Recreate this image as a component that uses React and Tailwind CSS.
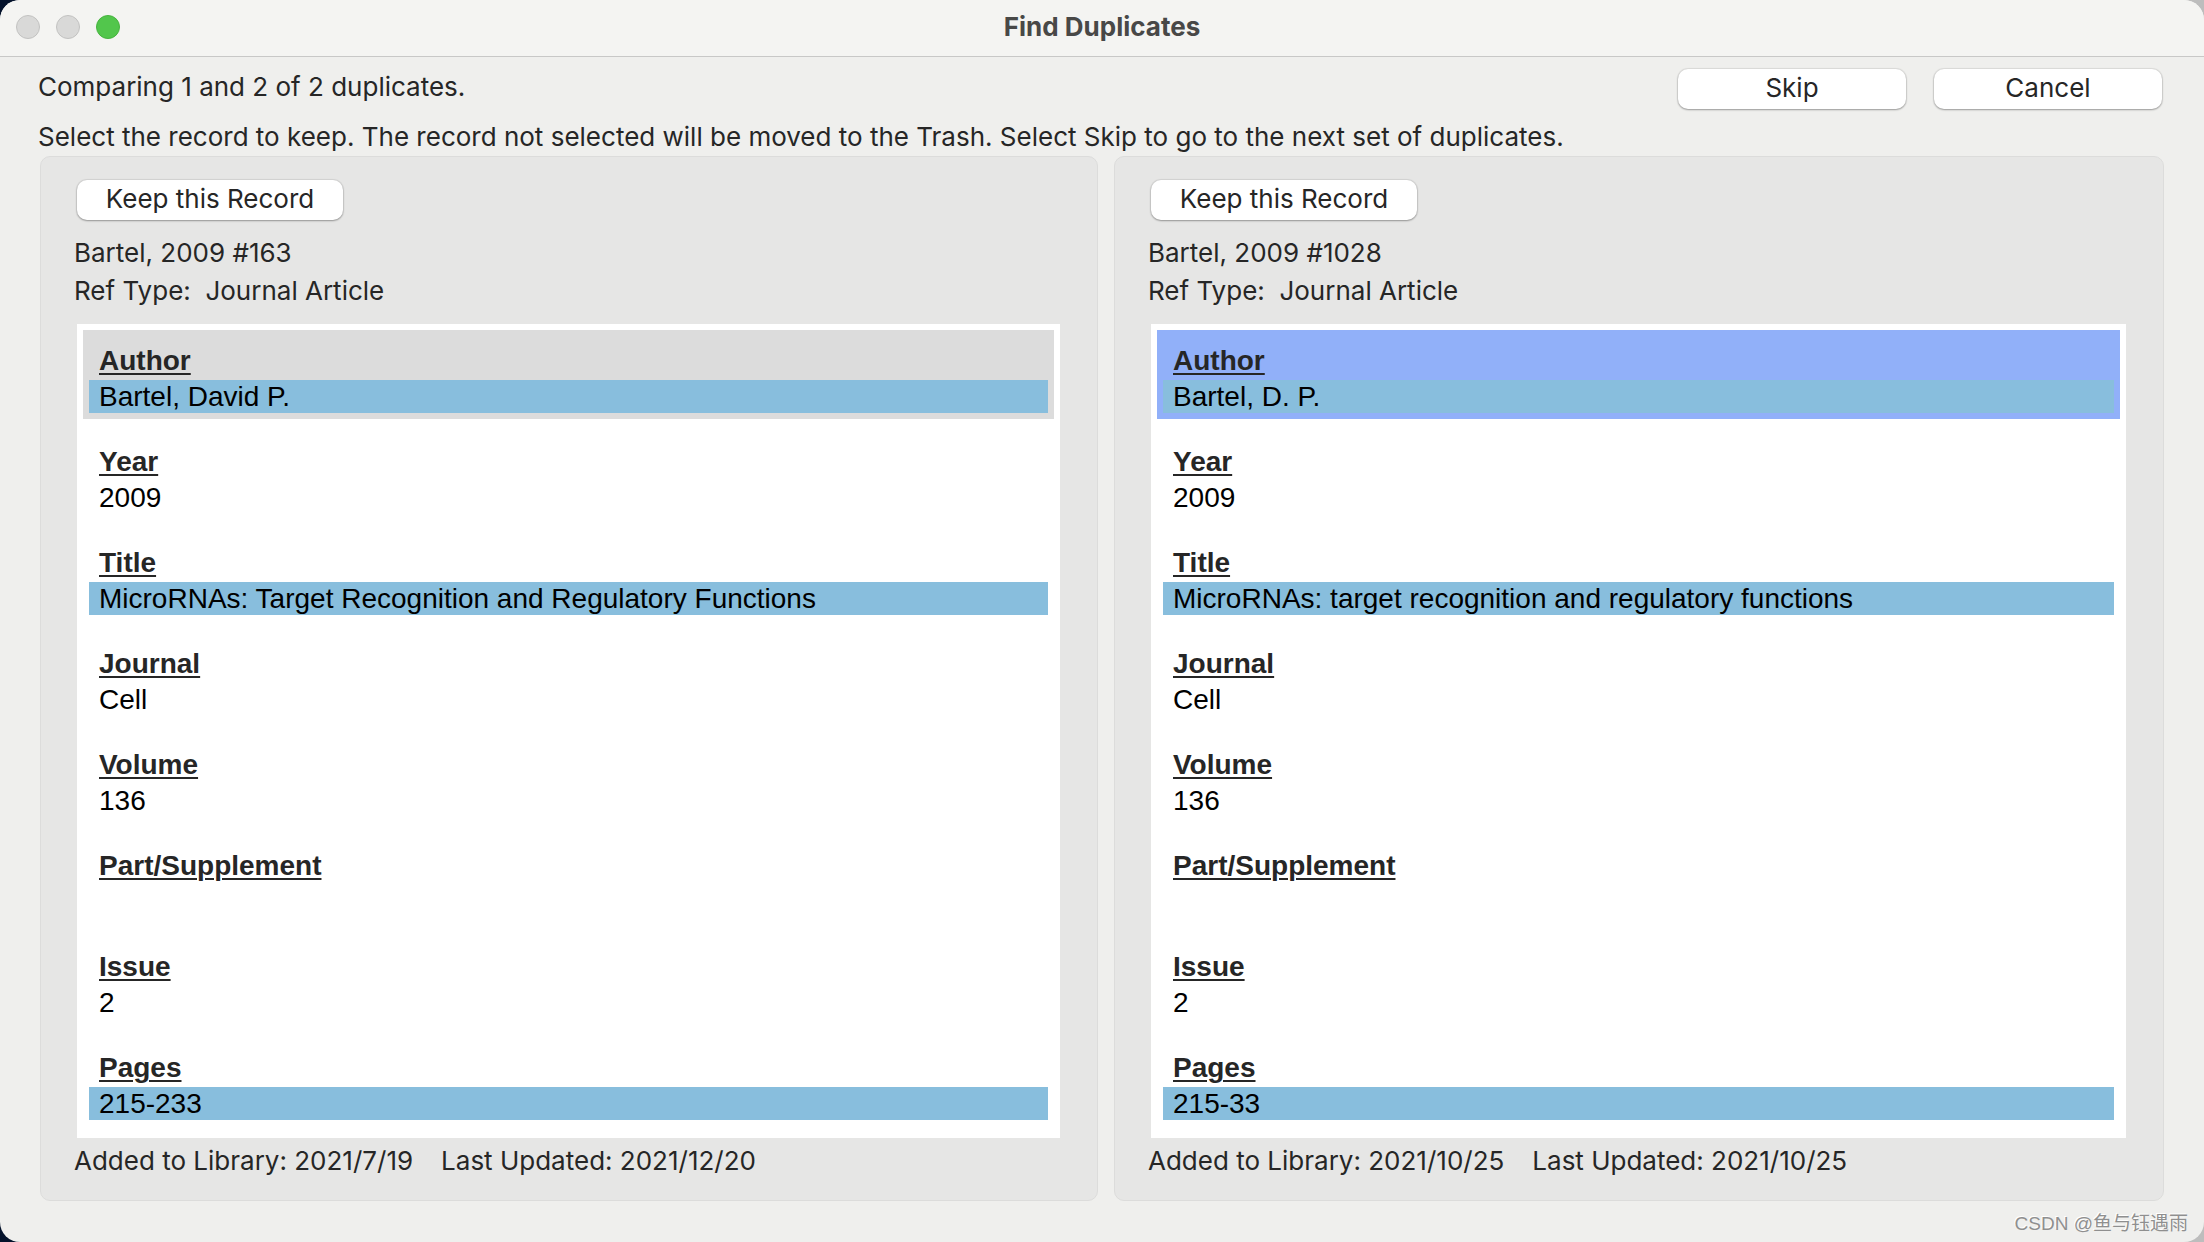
const records = [
  {
    id: "163",
    name: "Bartel, 2009 #163",
    refType: "Journal Article",
    added: "2021/7/19",
    updated: "2021/12/20",
    activeClass: "bg-[#dcdcdc]",
    fields: [
      { label: "Author", value: "Bartel, David P.", differs: true },
      { label: "Year", value: "2009" },
      { label: "Title", value: "MicroRNAs: Target Recognition and Regulatory Functions", differs: true },
      { label: "Journal", value: "Cell" },
      { label: "Volume", value: "136" },
      { label: "Part/Supplement", value: "" },
      { label: "Issue", value: "2" },
      { label: "Pages", value: "215-233", differs: true },
    ],
  },
  {
    id: "1028",
    name: "Bartel, 2009 #1028",
    refType: "Journal Article",
    added: "2021/10/25",
    updated: "2021/10/25",
    activeClass: "bg-[#91b0f9]",
    fields: [
      { label: "Author", value: "Bartel, D. P.", differs: true },
      { label: "Year", value: "2009" },
      { label: "Title", value: "MicroRNAs: target recognition and regulatory functions", differs: true },
      { label: "Journal", value: "Cell" },
      { label: "Volume", value: "136" },
      { label: "Part/Supplement", value: "" },
      { label: "Issue", value: "2" },
      { label: "Pages", value: "215-33", differs: true },
    ],
  },
];

function Button({ children, className }) {
  return (
    <button
      type="button"
      className={`block h-10 rounded-[10px] bg-white pb-0.5 leading-[38px] shadow-[0_0_1px_1px_rgba(0,0,0,0.08),0_1px_2px_rgba(0,0,0,0.3)] ${className}`}
    >
      {children}
    </button>
  );
}

function Field({ field, active, activeClass }) {
  return (
    <div className={`p-1.5 ${active ? activeClass : ""}`}>
      <dt className="h-11 px-2.5 pt-[9px] font-bold leading-8 text-[#262626] underline decoration-2 underline-offset-3">
        {field.label}
      </dt>
      <dd className={`h-[33px] px-2.5 leading-[33px] text-black ${field.differs ? "bg-[#88bedd]" : ""}`}>
        {field.value}
      </dd>
    </div>
  );
}

function RecordPanel({ record }) {
  return (
    <section className="rounded-[10px] border border-[#dcdcdb] bg-[#e6e6e5] pb-5 pl-[33px] pr-[37px] pt-[23px]">
      <Button className="ml-[3px] w-[266px]">Keep this Record</Button>
      <div className="mt-[14px] leading-[38px]">
        <p>{record.name}</p>
        <p className="whitespace-pre">Ref Type:{"  "}{record.refType}</p>
      </div>
      <dl className="ml-[3px] mt-[14px] flex flex-col gap-3 bg-white px-1.5 pb-3 pt-1.5 font-['Liberation_Sans',Arial,sans-serif] text-[28px]">
        {record.fields.map((field, i) => (
          <Field key={field.label} field={field} active={i === 0} activeClass={record.activeClass} />
        ))}
      </dl>
      <div className="mt-1 flex gap-7 leading-[38px]">
        <span>Added to Library: {record.added}</span>
        <span>Last Updated: {record.updated}</span>
      </div>
    </section>
  );
}

export default function App() {
  return (
    <div className="min-h-screen bg-linear-to-r from-[#04122b] from-50% to-[#bdbdbd] to-50% font-[Inter,sans-serif] text-[26px] text-[#262626]">
      <div className="relative min-h-screen overflow-hidden rounded-[20px] bg-[#efefed]">
        <header className="grid h-[57px] grid-cols-[1fr_auto_1fr] items-center border-b border-[#c8c8c7] bg-[#f4f4f2] px-4 pb-0.5">
          <div className="flex gap-4">
            <button type="button" aria-label="Close" className="size-6 rounded-full border border-[#c2c2c1] bg-[#d9d9d8]" />
            <button type="button" aria-label="Minimize" className="size-6 rounded-full border border-[#c2c2c1] bg-[#d9d9d8]" />
            <button type="button" aria-label="Zoom" className="size-6 rounded-full border border-[#47b33f] bg-[#52c64c]" />
          </div>
          <h1 className="font-bold leading-8 text-[#484847]">Find Duplicates</h1>
        </header>

        <main className="px-10 pb-10 pt-3">
          <div className="flex items-start justify-between pr-0.5">
            <div className="-ml-0.5 flex flex-col gap-[18px] pb-[3px] pt-0.5 leading-8">
              <p>Comparing 1 and 2 of 2 duplicates.</p>
              <p>
                Select the record to keep. The record not selected will be moved to the Trash. Select Skip to go to the
                next set of duplicates.
              </p>
            </div>
            <div className="flex shrink-0 gap-7">
              <Button className="w-[228px]">Skip</Button>
              <Button className="w-[228px]">Cancel</Button>
            </div>
          </div>

          <div className="grid grid-cols-[1058fr_1050fr] gap-4">
            {records.map((record) => (
              <RecordPanel key={record.id} record={record} />
            ))}
          </div>
        </main>

        <span className="absolute bottom-1 right-4 font-['Liberation_Sans','Noto_Sans_CJK_SC',sans-serif] text-[19px] leading-7 text-[#8f8f8f] [text-shadow:-1px_-1px_0_#fff]">
          CSDN @鱼与钰遇雨
        </span>
      </div>
    </div>
  );
}
